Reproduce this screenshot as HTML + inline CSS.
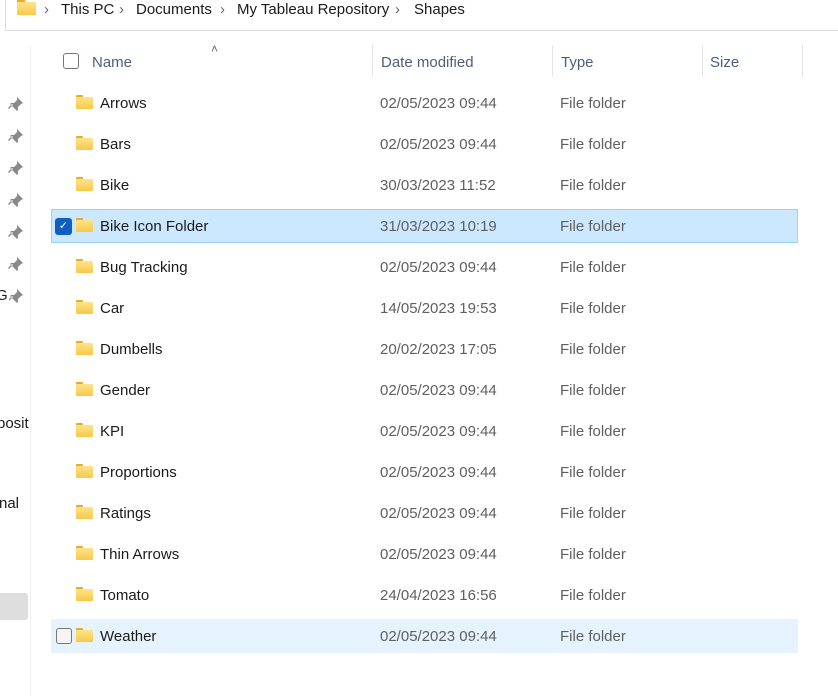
<!DOCTYPE html>
<html><head><meta charset="utf-8"><style>
*{margin:0;padding:0;box-sizing:border-box}
body{width:838px;height:696px;background:#fff;font-family:"Liberation Sans",sans-serif;position:relative;overflow:hidden;font-size:15px}
.a{position:absolute;white-space:nowrap}
.bc{position:absolute;left:5px;top:-2px;width:840px;height:33px;border:1px solid #dcdcdc;border-top:none;background:#fff}
.crumb{top:1px;font-size:15px;color:#1a1a1a}
.chev{top:1px;font-size:15px;color:#666}
.hdr{top:54px;color:#4c607a;font-size:15px}
.div{position:absolute;top:45px;width:1px;height:32px;background:#e5e5e5}
.row{position:absolute;left:51px;width:747px;height:34px}
.nm{left:100px;color:#1a1a1a}
.dt{left:380px;color:#5f5f5f}
.tp{left:560px;color:#5f5f5f}
.fold{position:absolute;left:76px;width:17px;height:14px}
.fold:before{content:"";position:absolute;left:0;top:0;width:7px;height:4px;background:#e9a92a;border-radius:1px 1px 0 0}
.fold:after{content:"";position:absolute;left:0;top:2px;width:17px;height:12px;background:linear-gradient(#fde48a,#f7c84a);border-radius:1px}
</style></head><body>
<div class="bc"></div>
<div class="a" style="left:17px;top:0px;width:19px;height:15px">
 <div style="position:absolute;left:0;top:0;width:8px;height:4px;background:#e9a92a"></div>
 <div style="position:absolute;left:0;top:2px;width:19px;height:13px;background:linear-gradient(#fde48a,#f7c84a)"></div>
</div>
<div class="a chev" style="left:44px">&#x203A;</div>
<div class="a crumb" style="left:61px">This PC</div>
<div class="a chev" style="left:119px">&#x203A;</div>
<div class="a crumb" style="left:136px">Documents</div>
<div class="a chev" style="left:220px">&#x203A;</div>
<div class="a crumb" style="left:237px">My Tableau Repository</div>
<div class="a chev" style="left:395px">&#x203A;</div>
<div class="a crumb" style="left:414px">Shapes</div>

<div style="position:absolute;left:30px;top:45px;width:1px;height:651px;background:#efefef"></div>

<div class="a" style="left:211px;top:42px;font-size:12px;color:#666">&#x2C4;</div>
<div style="position:absolute;left:63px;top:53px;width:16px;height:16px;border:1px solid #777;border-radius:3px"></div>
<div class="a hdr" style="left:92px">Name</div>
<div class="div" style="left:372px"></div>
<div class="a hdr" style="left:381px">Date modified</div>
<div class="div" style="left:552px"></div>
<div class="a hdr" style="left:561px">Type</div>
<div class="div" style="left:702px"></div>
<div class="a hdr" style="left:710px">Size</div>
<div class="div" style="left:802px"></div>

<div class="row" style="top:209px;background:#cce8ff;border:1px solid #99d1ff"></div>
<div class="row" style="top:619px;background:#e5f3ff"></div>
<div style="position:absolute;left:55px;top:218px;width:17px;height:17px;background:#0f5fc0;border-radius:3px;color:#fff;font-size:11px;text-align:center;line-height:17px">&#x2713;</div>
<div style="position:absolute;left:56px;top:628px;width:16px;height:16px;border:1px solid #777;border-radius:3px;background:#f5f5f5"></div>

<div id="rows"></div>

<svg class="a" style="left:0;top:0" width="30" height="696">
<defs><path id="p" d="M17 -6 l6 6 -2 1 -3 3 0 3 -1 1 -7 -7 1 -1 3 0 3 -3z M12 1 l-4 4 1 1 4 -4z"/></defs>
<g fill="#8a8a8a">
<use href="#p" x="0" y="103"/><use href="#p" x="0" y="135"/><use href="#p" x="0" y="167"/><use href="#p" x="0" y="199"/><use href="#p" x="0" y="231"/><use href="#p" x="0" y="263"/><use href="#p" x="0" y="295"/>
</g>
</svg>
<div class="a" style="left:-4px;top:287px;color:#1a1a1a;background:#fff;width:13px;overflow:hidden">G:</div>
<div class="a" style="left:-3px;top:415px;color:#1a1a1a">posit</div>
<div class="a" style="left:-1px;top:495px;color:#1a1a1a">nal</div>
<div style="position:absolute;left:0;top:593px;width:28px;height:27px;background:#dedede;border-radius:0 3px 3px 0"></div>

<script>
var d=[["Arrows","02/05/2023 09:44"],["Bars","02/05/2023 09:44"],["Bike","30/03/2023 11:52"],["Bike Icon Folder","31/03/2023 10:19"],["Bug Tracking","02/05/2023 09:44"],["Car","14/05/2023 19:53"],["Dumbells","20/02/2023 17:05"],["Gender","02/05/2023 09:44"],["KPI","02/05/2023 09:44"],["Proportions","02/05/2023 09:44"],["Ratings","02/05/2023 09:44"],["Thin Arrows","02/05/2023 09:44"],["Tomato","24/04/2023 16:56"],["Weather","02/05/2023 09:44"]];
var h="";d.forEach(function(r,i){var y=103+41*i;
h+='<div class="fold" style="top:'+(y-8)+'px"></div><div class="a nm" style="top:'+(y-8)+'px">'+r[0]+'</div><div class="a dt" style="top:'+(y-8)+'px">'+r[1]+'</div><div class="a tp" style="top:'+(y-8)+'px">File folder</div>';});
document.getElementById("rows").innerHTML=h;
</script>
</body></html>
